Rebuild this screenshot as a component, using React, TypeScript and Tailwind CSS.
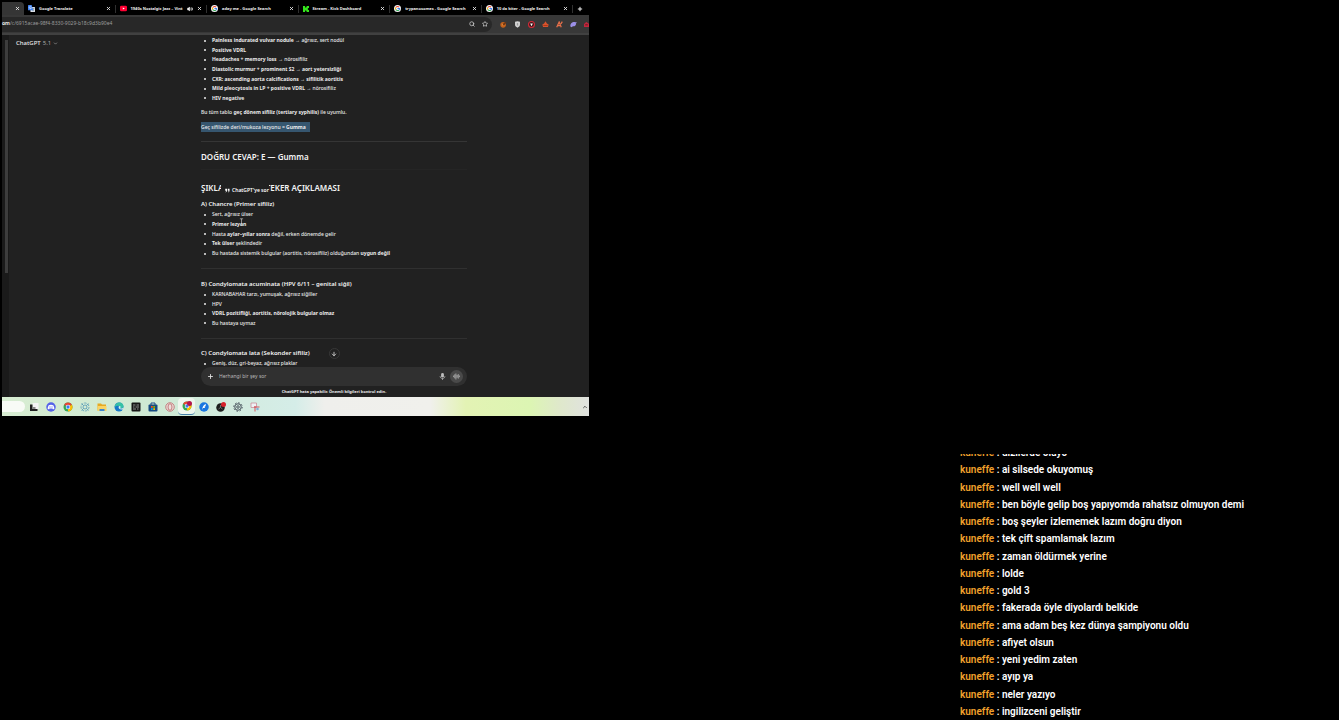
import { ReactNode } from "react";
import {
  ArrowDown,
  AudioLines,
  ChevronDown,
  ChevronUp,
  Mic,
  Plus,
  Search,
  Star,
  Volume2,
  X,
} from "lucide-react";

type IconProps = { children: ReactNode; className?: string };

function Glyph({ children, className = "size-2.5" }: IconProps) {
  return (
    <svg viewBox="0 0 20 20" className={`shrink-0 ${className}`} aria-hidden="true">
      {children}
    </svg>
  );
}

const translateIcon = (
  <Glyph className="size-[7px]">
    <rect x="7" y="6" width="13" height="14" rx="1.5" fill="#dfe3ea" />
    <path d="M10 10h8M14 8v2M17 10c-1 4-3 5-5 7M12 12c1 2 3 4 5 5" stroke="#607d8b" strokeWidth="1.5" fill="none" />
    <path d="M1.500 0h9l4 15h-13A1.500 1.500 0 0 1 0 13.500v-12z" fill="#4285f4" />
    <path d="M9.500 5.500A3.200 3.200 0 1 0 10 8H7" stroke="#fff" strokeWidth="1.600" fill="none" />
  </Glyph>
);

const youtubeIcon = (
  <Glyph className="size-[7px]">
    <rect y="2" width="20" height="16" rx="4" fill="#f03" />
    <path d="M8 7l6 3-6 3z" fill="#fff" />
  </Glyph>
);

const kickIcon = (
  <Glyph className="size-[6px]">
    <path d="M0 0h7v5h4V2h2V0h7v7h-3v2h-2v2h2v2h3v7h-7v-2h-2v-3H7v5H0z" fill="#35e41c" />
  </Glyph>
);

const googleIcon = (
  <Glyph className="size-[7px]">
    <circle cx="10" cy="10" r="10" fill="#f4f4f4" />
    <g fill="none" strokeWidth="3">
      <path d="M14.500 6A6 6 0 0 0 5 7" stroke="#ea4335" />
      <path d="M5 7a6 6 0 0 0 0 6" stroke="#fbbc05" />
      <path d="M5 13a6 6 0 0 0 9 1.500" stroke="#34a853" />
      <path d="M14 14.500A6 6 0 0 0 16 10h-6" stroke="#4285f4" />
    </g>
  </Glyph>
);

const tabs = [
  { title: "Google Translate", icon: translateIcon },
  { title: "1940s Nostalgic Jazz – Vint", icon: youtubeIcon, audio: true },
  { title: "aday me - Google Search", icon: googleIcon },
  { title: "Stream - Kick Dashboard", icon: kickIcon },
  { title: "trypanosomes - Google Search", icon: googleIcon },
  { title: "10 da biter - Google Search", icon: googleIcon },
];

function TabBar() {
  return (
    <div className="flex h-[13px] items-center bg-black text-[4px] font-bold text-[#f0f0f0]">
      <div className="flex h-full w-[22px] items-center justify-end rounded-tr bg-[#353535] pr-1">
        <button aria-label="Close tab">
          <X className="size-[5px]" strokeWidth={4} />
        </button>
      </div>
      {tabs.map((tab) => (
        <div key={tab.title} className="flex h-2 min-w-0 flex-1 items-center gap-1 border-r border-[#303030] pr-1 pl-1">
          {tab.icon}
          <span className="min-w-0 flex-1 whitespace-nowrap">{tab.title}</span>
          {tab.audio && <Volume2 className="size-[6px]" fill="currentColor" />}
          <button aria-label={`Close ${tab.title}`}>
            <X className="size-[5px]" strokeWidth={4} />
          </button>
        </div>
      ))}
      <button aria-label="New tab" className="flex w-4 pl-1">
        <Plus className="size-[6px]" strokeWidth={4} />
      </button>
    </div>
  );
}

function Toolbar() {
  return (
    <div className="flex h-[18px] items-center bg-[#383838] text-[5px] text-[#9c9c9c]">
      <div className="flex h-[15px] min-w-0 flex-1 items-center rounded-r-full bg-[#282828] pr-1">
        <span className="font-semibold text-white">om</span>
        <input
          aria-label="Address"
          className="min-w-0 flex-1 bg-transparent outline-none"
          defaultValue="/c/6915acae-98f4-8330-9029-b18c9d3b90e4"
        />
        <div className="flex items-center gap-[7px] text-[#d0d0d0]">
          <Search className="size-[6px]" strokeWidth={3} />
          <Star className="size-[6px]" strokeWidth={3} />
        </div>
      </div>
      <div className="flex items-center gap-[7px] pl-2">
        <Glyph className="size-[7px]">
          <circle cx="9" cy="11" r="8" fill="#c4621c" />
          <path d="M6 12l5-7 8-2-5 8z" fill="#6b3413" />
          <circle cx="7" cy="11" r="2" fill="#f0a050" />
        </Glyph>
        <Glyph className="size-[7px]">
          <path d="M3 2l7-1 7 1v9c0 4-3 6-7 8-4-2-7-4-7-8z" fill="#d6d6d6" />
          <path d="M8 6h4v7H8z" fill="#9a9a9a" />
        </Glyph>
        <Glyph className="size-[7px]">
          <circle cx="10" cy="10" r="8.500" fill="#3a1519" stroke="#d62c3a" strokeWidth="3" />
          <path d="M6 7h8l-4 8z" fill="#fff" />
        </Glyph>
        <Glyph className="size-[7px]">
          <path d="M10 1l4 6 5 3-2 7H3L1 10l5-3z" fill="#d9532c" />
          <path d="M4 12h12v2H4z" fill="#8e2f17" />
        </Glyph>
        <Glyph className="size-[7px]">
          <path d="M2 18L9 3l6 15M5 13h9M14 8l4-6" stroke="#e8704a" strokeWidth="3.500" fill="none" />
        </Glyph>
        <Glyph className="size-[7px]">
          <path d="M1 16c-1-7 4-13 12-13l7 1-3 3c1 6-4 9-9 8l-3 3z" fill="#9b8fe6" />
        </Glyph>
        <Glyph className="size-[5px]">
          <path d="M0 8L9 0l11 7v13H0z" fill="#c2263c" />
          <path d="M5 10h10v3H5z" fill="#3a1519" />
        </Glyph>
      </div>
    </div>
  );
}

type ListProps = { items: ReactNode[]; className: string };

function Bullets({ items, className }: ListProps) {
  return (
    <ul className={`flex flex-col justify-between leading-[9px] ${className}`}>
      {items.map((item, i) => (
        <li key={i} className="flex items-center">
          <span className="mr-[6px] ml-[3px] size-[2px] shrink-0 rounded-full bg-[#ececec]" />
          <span className="whitespace-nowrap">{item}</span>
        </li>
      ))}
    </ul>
  );
}

const findings = [
  <><b>Painless indurated vulvar nodule</b> → ağrısız, sert nodül</>,
  <b>Positive VDRL</b>,
  <><b>Headaches + memory loss</b> → nörosifiliz</>,
  <b>Diastolic murmur + prominent S2 → aort yetersizliği</b>,
  <b>CXR: ascending aorta calcifications → sifilitik aortitis</b>,
  <><b>Mild pleocytosis in LP + positive VDRL</b> → nörosifiliz</>,
  <b>HIV negative</b>,
];

const chancre = [
  "Sert, ağrısız ülser",
  <b>Primer lezyon</b>,
  <>Hasta <b>aylar–yıllar sonra</b> değil, erken dönemde gelir</>,
  <><b>Tek ülser</b> şeklindedir</>,
  <>Bu hastada sistemik bulgular (aortitis, nörosifiliz) olduğundan <b>uygun değil</b></>,
];

const acuminata = [
  "KARNABAHAR tarzı, yumuşak, ağrısız siğiller",
  "HPV",
  <b>VDRL pozitifliği, aortitis, nörolojik bulgular olmaz</b>,
  "Bu hastaya uymaz",
];

function Answer() {
  return (
    <article className="w-[266px] text-[5px] leading-[10px] font-medium text-[#ececec]">
      <Bullets items={findings} className="h-[67px]" />
      <p className="mt-1">
        Bu tüm tablo <b>geç dönem sifiliz (tertiary syphilis)</b> ile uyumlu.
      </p>
      <p className="mt-[5px]">
        <mark className="inline-block bg-[#36566f] pr-1 text-[#ececec]">
          Geç sifilizde deri/mukoza lezyonu = <b>Gumma</b>
        </mark>
      </p>
      <hr className="mt-[9px] border-[#353535]" />
      <h2 className="mt-[9px] text-[8px] leading-3 font-semibold text-[#f4f4f4]">DOĞRU CEVAP: E — Gumma</h2>
      <hr className="mt-[6px] border-[#252525]" />
      <div className="relative mt-3">
        <h2 className="text-[8px] leading-3 font-semibold text-[#f4f4f4]">ŞIKLARIN TEKER TEKER AÇIKLAMASI</h2>
        <button className="absolute top-0 left-5 flex h-4 w-12 items-center gap-0.5 bg-[#212121] pl-1 text-[5px] font-semibold whitespace-nowrap text-white">
          <Glyph className="size-[5px]">
            <path d="M1 3h7v7c0 4-2 6-5 8l-1-2c2-1 3-3 3-5H1zM11 3h7v7c0 4-2 6-5 8l-1-2c2-1 3-3 3-5h-4z" fill="currentColor" />
          </Glyph>
          ChatGPT'ye sor
        </button>
      </div>
      <h3 className="mt-[5px] text-[6px] font-semibold text-[#f4f4f4]">A) Chancre (Primer sifiliz)</h3>
      <div className="relative mt-px">
        <Bullets items={chancre} className="h-12" />
        <svg viewBox="0 0 6 10" className="absolute top-2 left-[38px] h-2 w-[5px]" aria-hidden="true">
          <path d="M1 1h4M3 1v8M1 9h4" stroke="#d0d0d0" strokeWidth="0.800" fill="none" />
        </svg>
      </div>
      <hr className="mt-[10px] border-[#303030]" />
      <h3 className="mt-[10px] text-[6px] font-semibold text-[#f4f4f4]">
        B) Condylomata acuminata (HPV 6/11 – genital siğil)
      </h3>
      <Bullets items={acuminata} className="mt-px h-[38px]" />
      <hr className="mt-[10px] border-[#303030]" />
      <h3 className="mt-[9px] text-[6px] font-semibold text-[#f4f4f4]">C) Condylomata lata (Sekonder sifiliz)</h3>
      <Bullets items={["Geniş, düz, gri-beyaz, ağrısız plaklar"]} className="mt-px h-[9px]" />
    </article>
  );
}

function Composer() {
  return (
    <div className="absolute bottom-0 left-[192px] w-[266px]">
      <button
        aria-label="Scroll to bottom"
        className="mx-auto mb-2 flex size-[11px] items-center justify-center rounded-full border border-[#383838] bg-[#212121] text-[#ececec]"
      >
        <ArrowDown className="size-[6px]" strokeWidth={3} />
      </button>
      <form className="flex h-[19px] items-center rounded-full bg-[#303030] pr-1 pl-[6px] text-[#e0e0e0]">
        <button type="button" aria-label="Add">
          <Plus className="size-[7px]" strokeWidth={3} />
        </button>
        <input
          aria-label="Message"
          className="ml-[5px] min-w-0 flex-1 bg-transparent text-[5px] outline-none placeholder:text-[#b8b8b8]"
          placeholder="Herhangi bir şey sor"
        />
        <button type="button" aria-label="Dictate">
          <Glyph className="size-[7px]">
            <rect x="6" y="0" width="8" height="13" rx="4" fill="#bdbdbd" />
            <path d="M3 9c0 9 14 9 14 0M10 15v5" stroke="#bdbdbd" strokeWidth="2" fill="none" />
          </Glyph>
        </button>
        <button
          type="button"
          aria-label="Voice mode"
          className="ml-1 flex size-[13px] items-center justify-center rounded-full bg-[#4a4a4a]"
        >
          <AudioLines className="size-[7px]" />
        </button>
      </form>
      <p className="bg-[#212121] text-center text-[4px] leading-[11px] font-bold text-[#ececec]">
        ChatGPT hata yapabilir. Önemli bilgileri kontrol edin.
      </p>
    </div>
  );
}

function chrome(key: string) {
  return (
    <g key={key}>
      <circle cx="10" cy="10" r="9" fill="#34a853" />
      <path d="M10 10L2.200 5.500A9 9 0 0 1 17.800 5.500z" fill="#ea4335" />
      <path d="M10 10l7.800-4.500A9 9 0 0 1 10 19z" fill="#fbbc05" />
      <circle cx="10" cy="10" r="4.500" fill="#fff" />
      <circle cx="10" cy="10" r="3.300" fill="#3b7ded" />
    </g>
  );
}

const apps = [
  {
    name: "Task view",
    art: (
      <>
        <rect x="7" y="2" width="12" height="12" fill="#f4f4f4" />
        <path d="M2 5h5v9h10v4H2z" fill="#202020" />
        <path d="M8 10h5v4H8z" fill="#8a8a8a" />
      </>
    ),
  },
  {
    name: "Discord",
    art: (
      <>
        <circle cx="10" cy="10" r="9.500" fill="#5562e8" />
        <path d="M5 7c3-2 7-2 10 0l2 6-3 2-1-2H7l-1 2-3-2z" fill="#fff" />
        <path d="M7 9h2v2H7zM11 9h2v2h-2z" fill="#5562e8" />
      </>
    ),
  },
  { name: "Chrome", art: chrome("a") },
  {
    name: "Atom",
    art: (
      <g fill="none" stroke="#4c93b4" strokeWidth="1.500">
        <circle cx="10" cy="10" r="8" strokeDasharray="5 2" />
        <circle cx="10" cy="10" r="4" />
        <path d="M3 3l4 4M17 3l-4 4M3 17l4-4M17 17l-4-4" />
      </g>
    ),
  },
  {
    name: "Files",
    art: (
      <>
        <path d="M1 3h7l2 2h8v12H1z" fill="#e6a923" />
        <path d="M1 8h18v10H1z" fill="#f9d465" />
        <path d="M5 14h10v4H5z" fill="#3d85d0" />
      </>
    ),
  },
  {
    name: "Edge",
    art: (
      <>
        <circle cx="10" cy="10" r="9" fill="#1577c8" />
        <path d="M1 10C2 4 6 1 11 1c5 0 8 4 8 8 0 3-4 4-7 3 2-4-4-7-11-2z" fill="#36c2a5" />
        <path d="M10 8c4 0 4 3 2 4 2 2 5 1 7-1v4c-3 0-8 0-9-2-1-1-1-3 0-5z" fill="#d9f0ea" />
      </>
    ),
  },
  {
    name: "Terminal",
    art: (
      <>
        <rect x="1" y="1" width="18" height="18" rx="2" fill="#161616" />
        <path d="M4 6h5M11 6h5M4 10h3M9 10h7M4 14h6M12 14h3" stroke="#bababa" strokeWidth="1.500" />
      </>
    ),
  },
  {
    name: "Store",
    art: (
      <>
        <path d="M6 6V2h8v4" stroke="#1c4d86" strokeWidth="2" fill="none" />
        <rect x="1" y="5" width="18" height="14" rx="2" fill="#174a80" />
        <path d="M6 8h3.500v3.500H6z" fill="#f25022" />
        <path d="M10.500 8H14v3.500h-3.500z" fill="#7fba00" />
        <path d="M6 12.500h3.500V16H6z" fill="#00a4ef" />
        <path d="M10.500 12.500H14V16h-3.500z" fill="#ffb900" />
      </>
    ),
  },
  {
    name: "Opera",
    art: (
      <g fill="none" stroke="#b85c61" strokeWidth="1.500">
        <circle cx="10" cy="10" r="8.500" fill="#ecdfda" />
        <ellipse cx="10" cy="10" rx="4" ry="6.500" />
      </g>
    ),
  },
  {
    name: "Chrome profile",
    open: true,
    art: (
      <>
        {chrome("b")}
        <circle cx="15" cy="5" r="5" fill="#b0174f" />
      </>
    ),
  },
  {
    name: "Feather",
    art: (
      <>
        <circle cx="10" cy="10" r="9.500" fill="#1976e0" />
        <path d="M6 16c1-7 3-11 8-12l-1 4-3 1h3l-2 3H8z" fill="#fff" />
      </>
    ),
  },
  {
    name: "OBS",
    art: (
      <>
        <circle cx="9" cy="11" r="8.500" fill="#1d1d1d" />
        <path d="M9 11V6M9 11l-4 3M9 11l4 3" stroke="#888" strokeWidth="1.500" />
        <circle cx="15" cy="5" r="5" fill="#d6212b" />
      </>
    ),
  },
  {
    name: "Settings",
    art: (
      <g fill="none" stroke="#48525c">
        <circle cx="10" cy="10" r="6.500" strokeWidth="2" />
        <circle cx="10" cy="10" r="2.500" strokeWidth="2" />
        <circle cx="10" cy="10" r="8.500" strokeWidth="2" strokeDasharray="3 3.600" />
      </g>
    ),
  },
  {
    name: "Snipping tool",
    art: (
      <>
        <path d="M2 2h11v9H2z" fill="#eef1f5" stroke="#c98a94" strokeWidth="1.500" />
        <path d="M10 8v11M8 10h11" stroke="#d2545f" strokeWidth="2" />
        <circle cx="15" cy="14" r="2.500" fill="#7eb1d6" />
      </>
    ),
  },
];

function Taskbar() {
  return (
    <nav
      aria-label="Taskbar"
      className="flex h-[19px] items-center bg-[linear-gradient(90deg,#d8edd2_0%,#cfe9d3_25%,#d5ede8_50%,#efefec_55%,#f0f0ec_73%,#e3f3b4_79%,#dcf5b3_90%,#dfe8cb_95%,#e0e2df_100%)]"
    >
      <div className="h-[11px] w-[23px] rounded-r-full bg-[#f8fbf6]" />
      {apps.map((app) => (
        <button
          key={app.name}
          aria-label={app.name}
          className={`flex h-[17px] w-[17px] items-center justify-center rounded-sm ${
            app.open ? "border-b border-[#4580a8] bg-[#eef6ed]" : ""
          }`}
        >
          <Glyph>{app.art}</Glyph>
        </button>
      ))}
      <ChevronUp className="mr-px ml-auto size-[6px] text-[#303030]" strokeWidth={3} />
    </nav>
  );
}

function SharedScreen() {
  return (
    <section className="pt-0.5 pl-0.5 font-['Noto_Sans','Open_Sans',sans-serif]">
      <TabBar />
      <Toolbar />
      <main className="flex h-[364px] overflow-hidden border-t-2 border-[#414141] bg-[#212121]">
        <div className="w-[7px] shrink-0 bg-[#1a1a1a] pt-[5px]">
          <div className="ml-[3px] h-[233px] w-[3px] bg-[#3d3d3d]" />
        </div>
        <div className="relative min-w-0 flex-1">
          <button className="absolute top-[3px] left-[7px] flex items-center gap-0.5 text-[6px] leading-[10px] font-medium text-[#e8e8e8]">
            ChatGPT <span className="font-normal text-[#a8a8a8]">5.1</span>
            <ChevronDown className="size-[5px] text-[#a8a8a8]" strokeWidth={3} />
          </button>
          <div className="pt-px pl-[192px]">
            <Answer />
          </div>
          <Composer />
        </div>
      </main>
      <Taskbar />
    </section>
  );
}

const messages = [
  "dizilerde oluyo",
  "ai silsede okuyomuş",
  "well well well",
  "ben böyle gelip boş yapıyomda rahatsız olmuyon demi",
  "boş şeyler izlememek lazım doğru diyon",
  "tek çift spamlamak lazım",
  "zaman öldürmek yerine",
  "lolde",
  "gold 3",
  "fakerada öyle diyolardı belkide",
  "ama adam beş kez dünya şampiyonu oldu",
  "afiyet olsun",
  "yeni yedim zaten",
  "ayıp ya",
  "neler yazıyo",
  "ingilizceni geliştir",
];

function Chat() {
  return (
    <section className="flex h-[266px] flex-col justify-end self-end overflow-hidden font-['Roboto',sans-serif] text-[10px] leading-[17px] font-semibold text-white">
      <ul className="flex h-[276px] shrink-0 flex-col justify-between">
        {messages.map((message) => (
          <li key={message}>
            <span className="text-[#f0a02c]">kuneffe</span> : {message}
          </li>
        ))}
      </ul>
    </section>
  );
}

export default function App() {
  return (
    <div className="grid min-h-screen grid-cols-[44%_1fr_379px] overflow-hidden bg-black">
      <SharedScreen />
      <div />
      <Chat />
    </div>
  );
}
